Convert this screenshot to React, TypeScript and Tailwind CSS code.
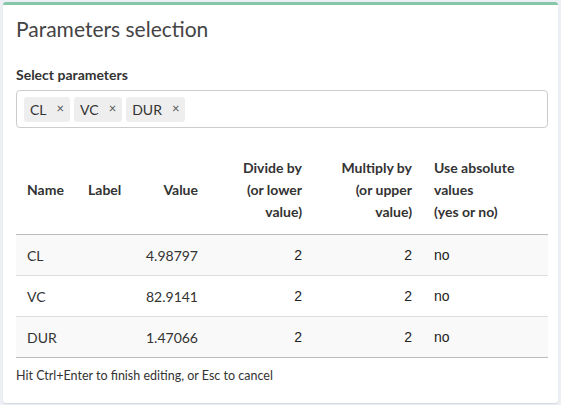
import React from 'react'

const rows = [
  { name: 'CL', label: '', value: '4.98797', lower: '2', upper: '2', abs: 'no' },
  { name: 'VC', label: '', value: '82.9141', lower: '2', upper: '2', abs: 'no' },
  { name: 'DUR', label: '', value: '1.47066', lower: '2', upper: '2', abs: 'no' },
]

const chips = ['CL', 'VC', 'DUR']

export default function App() {
  return (
    <div className="min-h-[405px] bg-[#ecf0f5] px-[3px] pt-[2px] font-['Lato',sans-serif] text-[#333]">
      <div className="h-[401px] rounded-[3px] border-t-[3px] border-[#86c6a9] bg-white pl-[13px] pr-[10px] shadow-[0_1px_1px_rgba(0,0,0,0.1)]">
        <h3 className="pt-[9px] text-[21px] leading-[30px] text-[#444]">Parameters selection</h3>
        <div className="mt-[21px] text-[14px] font-bold leading-[20px]">Select parameters</div>
        <div className="mt-[5px] flex h-[38px] items-center gap-[4px] rounded-[4px] border border-[#ccc] px-[7px]">
          {chips.map((c) => (
            <span key={c} className="flex h-[25px] items-center rounded-[3px] bg-[#eee] pl-[6px] pr-[6px] text-[14px]">
              {c}
              <span className="ml-[10px] text-[13px] text-[#555]">×</span>
            </span>
          ))}
        </div>
        <table className="mt-[29px] w-full table-fixed border-collapse text-[14px]">
          <thead>
            <tr className="border-b border-[#bbb] align-middle font-bold leading-[22px]">
              <th className="w-[72px] pb-[12px] pl-[11px] text-left">Name</th>
              <th className="w-[43px] pb-[12px] text-left">Label</th>
              <th className="w-[67px] pb-[12px] text-right">Value</th>
              <th className="w-[104px] pb-[11px] text-right">Divide by<br />(or lower<br />value)</th>
              <th className="w-[110px] pb-[11px] text-right">Multiply by<br />(or upper<br />value)</th>
              <th className="pb-[11px] pl-[22px] text-left">Use absolute<br />values<br />(yes or no)</th>
            </tr>
          </thead>
          <tbody>
            {rows.map((r, i) => (
              <tr
                key={r.name}
                className={`h-[41px] border-b ${i === rows.length - 1 ? 'border-[#bbb]' : 'border-[#ddd]'} ${i % 2 === 0 ? 'bg-[#f9f9f9]' : 'bg-white'}`}
              >
                <td className="pl-[11px]">{r.name}</td>
                <td>{r.label}</td>
                <td className="text-right">{r.value}</td>
                <td className="text-right font-['Liberation_Sans',sans-serif] text-[14px] text-[#222]">{r.lower}</td>
                <td className="text-right font-['Liberation_Sans',sans-serif] text-[14px] text-[#222]">{r.upper}</td>
                <td className="pl-[22px] font-['Liberation_Sans',sans-serif] text-[14px] text-[#222]">{r.abs}</td>
              </tr>
            ))}
          </tbody>
        </table>
        <p className="mt-[9px] text-[12.5px] leading-[18px]">Hit Ctrl+Enter to finish editing, or Esc to cancel</p>
      </div>
    </div>
  )
}
